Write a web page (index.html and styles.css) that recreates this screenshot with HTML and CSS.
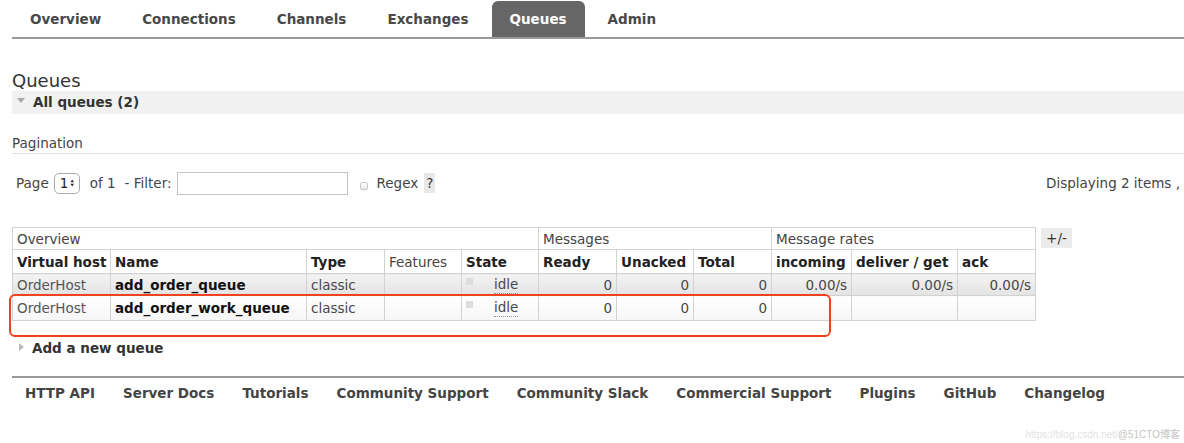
FILE: index.html
```html
<!DOCTYPE html>
<html>
<head>
<meta charset="utf-8">
<link rel="stylesheet" href="styles.css">
</head>
<body>
<div class="page">
  <ul class="tabs">
    <li class="tab">Overview</li>
    <li class="tab">Connections</li>
    <li class="tab">Channels</li>
    <li class="tab">Exchanges</li>
    <li class="tab active">Queues</li>
    <li class="tab">Admin</li>
  </ul>

  <h1 class="title">Queues</h1>
  <div class="section-bar"><span class="tri-down"></span>All queues (2)</div>

  <h3 class="pag-title">Pagination</h3>
  <div class="controls">
    <div class="ctl-left">
      <span>Page</span>
      <span class="fake-select">1<svg width="7" height="12" viewBox="0 0 7 12"><path d="M3.5 0.5 L6.5 5 L0.5 5 Z" fill="#333"/><path d="M3.5 11.5 L6.5 7 L0.5 7 Z" fill="#333"/></svg></span>
      <span class="of">of 1</span>
      <span class="filter">- Filter:</span>
      <span class="fake-input"></span>
      <span class="fake-check"></span>
      <span class="regex">Regex</span>
      <span class="help">?</span>
    </div>
    <div class="ctl-right">Displaying 2 items ,</div>
  </div>

  <div class="table-row">
    <div class="table-wrap">
      <table class="list">
        <colgroup>
          <col class="c98"><col class="c196"><col class="c78"><col class="c77"><col class="c77">
          <col class="c78"><col class="c77"><col class="c78"><col class="c80"><col class="c106"><col class="c78">
        </colgroup>
        <thead>
          <tr class="group">
            <th colspan="5">Overview</th>
            <th colspan="3">Messages</th>
            <th colspan="3">Message rates</th>
          </tr>
          <tr class="heads">
            <th>Virtual host</th>
            <th>Name</th>
            <th>Type</th>
            <th class="plain">Features</th>
            <th>State</th>
            <th>Ready</th>
            <th>Unacked</th>
            <th>Total</th>
            <th>incoming</th>
            <th>deliver / get</th>
            <th>ack</th>
          </tr>
        </thead>
        <tbody>
          <tr class="alt1">
            <td class="vh">OrderHost</td>
            <td class="nm">add_order_queue</td>
            <td>classic</td>
            <td></td>
            <td><span class="state"><span class="dot"></span><span class="idle">idle</span></span></td>
            <td class="r">0</td>
            <td class="r">0</td>
            <td class="r">0</td>
            <td class="r">0.00/s</td>
            <td class="r">0.00/s</td>
            <td class="r">0.00/s</td>
          </tr>
          <tr class="alt2">
            <td class="vh">OrderHost</td>
            <td class="nm">add_order_work_queue</td>
            <td>classic</td>
            <td></td>
            <td><span class="state"><span class="dot"></span><span class="idle">idle</span></span></td>
            <td class="r">0</td>
            <td class="r">0</td>
            <td class="r">0</td>
            <td></td>
            <td></td>
            <td></td>
          </tr>
        </tbody>
      </table>
      <div class="highlight"></div>
    </div>
    <span class="plusminus">+/-</span>
  </div>

  <div class="add-new"><span class="tri-right"></span>Add a new queue</div>

  <div class="footer">
    <span>HTTP API</span>
    <span>Server Docs</span>
    <span>Tutorials</span>
    <span>Community Support</span>
    <span>Community Slack</span>
    <span>Commercial Support</span>
    <span>Plugins</span>
    <span>GitHub</span>
    <span>Changelog</span>
  </div>
</div>
<div class="watermark">https://blog.csdn.net/<span class="wm-dark">@51CTO博客</span></div>
</body>
</html>
```

FILE: styles.css
```css
html, body {
  margin: 0;
  padding: 0;
  background: #fff;
}
body {
  font-family: "DejaVu Sans", Verdana, sans-serif;
  font-size: 13.5px;
  color: #484848;
  position: relative;
  width: 1184px;
  height: 443px;
  overflow: hidden;
}
.page {
  margin-left: 12px;
}
.tabs {
  list-style: none;
  margin: 0;
  padding: 1px 0 0 0;
  display: flex;
  gap: 5px;
  border-bottom: 2px solid #999;
  height: 36px;
}
.tab {
  padding: 0 18px;
  font-weight: bold;
  line-height: 36px;
  color: #484848;
  border-radius: 6px 6px 0 0;
}
.tab.active {
  background: #666;
  color: #fff;
}
.title {
  font-size: 18px;
  font-weight: normal;
  margin: 31px 0 0 0;
  line-height: 21px;
  color: #333;
}
.section-bar {
  background: #f1f1f1;
  height: 23px;
  line-height: 23px;
  font-weight: bold;
  color: #333;
  display: flex;
  align-items: center;
}
.tri-down {
  width: 0;
  height: 0;
  border-left: 4px solid transparent;
  border-right: 4px solid transparent;
  border-top: 5px solid #aaa;
  margin: 0 8px 4px 5px;
}
.pag-title {
  font-size: 13.5px;
  font-weight: normal;
  margin: 19px 0 0 0;
  line-height: 20px;
  padding-bottom: 0;
  border-bottom: 1px solid #ddd;
  color: #444;
}
.controls {
  display: flex;
  justify-content: space-between;
  align-items: center;
  margin-top: 17px;
  height: 24px;
}
.ctl-left {
  display: flex;
  align-items: center;
  padding-left: 4px;
  color: #444;
}
.fake-select {
  display: inline-flex;
  align-items: center;
  gap: 2px;
  padding: 0 4px 0 5px;
  margin-left: 5px;
  border: 1px solid #aaa;
  border-radius: 5px;
  box-sizing: border-box;
  width: 26px;
  height: 21px;
  color: #222;
}
.of {
  margin-left: 10px;
}
.filter {
  margin-left: 9px;
}
.fake-input {
  display: inline-block;
  width: 171px;
  height: 23px;
  box-sizing: border-box;
  border: 1px solid #c4c4c4;
  margin-left: 5px;
  background: #fff;
}
.fake-check {
  display: inline-block;
  width: 8px;
  height: 8px;
  border: 1px solid #c8c8c8;
  border-radius: 2px;
  background: linear-gradient(#fff, #e6e6e6);
  margin-left: 12px;
  margin-top: 5px;
  box-sizing: border-box;
}
.regex {
  margin-left: 9px;
}
.help {
  margin-left: 6px;
  background: #e8e8e8;
  padding: 0 2px;
  line-height: 20px;
  color: #333;
}
.ctl-right {
  padding-right: 4px;
  color: #444;
}
.table-row {
  display: flex;
  align-items: flex-start;
  gap: 5px;
  margin-top: 32px;
}
.table-wrap {
  position: relative;
}
table.list {
  border-collapse: collapse;
  table-layout: fixed;
  width: 1023px;
  color: #484848;
}
.c98 { width: 98px; }
.c196 { width: 196px; }
.c78 { width: 78px; }
.c77 { width: 77px; }
.c80 { width: 80px; }
.c106 { width: 106px; }
table.list th, table.list td {
  border: 1px solid #d2d2d2;
  padding: 0 4px;
  text-align: left;
  white-space: nowrap;
  overflow: hidden;
}
table.list th {
  height: 21px;
  font-weight: bold;
  color: #222;
}
table.list tr.heads th {
  height: 22px;
  padding-top: 1px;
}
table.list tr.group th {
  font-weight: normal;
  color: #444;
}
table.list th.plain {
  font-weight: normal;
  color: #444;
}
table.list tr.alt1 td {
  height: 21px;
  background: linear-gradient(#f3f3f3, #e3e3e3);
}
table.list tr.alt2 td {
  height: 24px;
  background: linear-gradient(#fff, #f6f6f6);
}
table.list td.vh {
  color: #555;
}
table.list td.nm {
  font-weight: bold;
  color: #111;
}
table.list td.r {
  text-align: right;
}
.state {
  display: flex;
  align-items: flex-start;
}
.dot {
  width: 7px;
  height: 7px;
  background: #ddd;
  margin-top: 2px;
  margin-right: 21px;
}
.idle {
  border-bottom: 1px dotted #999;
  line-height: 17px;
}
.highlight {
  position: absolute;
  left: -3px;
  top: 67px;
  width: 822px;
  height: 43px;
  box-sizing: border-box;
  border: 2px solid #f0421e;
  border-radius: 6px;
}
.plusminus {
  display: inline-block;
  background: #ebebeb;
  padding: 0 5px;
  line-height: 20px;
  margin-top: 1px;
  color: #333;
}
.add-new {
  margin-top: 18px;
  font-weight: bold;
  color: #333;
  display: flex;
  align-items: center;
  line-height: 19px;
}
.tri-right {
  width: 0;
  height: 0;
  border-top: 4px solid transparent;
  border-bottom: 4px solid transparent;
  border-left: 5px solid #bbb;
  margin: 0 8px 4px 7px;
}
.footer {
  margin-top: 18px;
  border-top: 2px solid #999;
  display: flex;
  gap: 28px;
  padding: 6px 0 0 13px;
  font-weight: bold;
  color: #444;
  line-height: 18px;
}
.watermark {
  position: absolute;
  right: 4px;
  bottom: 2px;
  font-family: "Liberation Sans", "Noto Sans CJK SC", sans-serif;
  font-size: 10px;
  color: #e2e2e2;
}
.wm-dark {
  color: #c4c4c4;
}
```
